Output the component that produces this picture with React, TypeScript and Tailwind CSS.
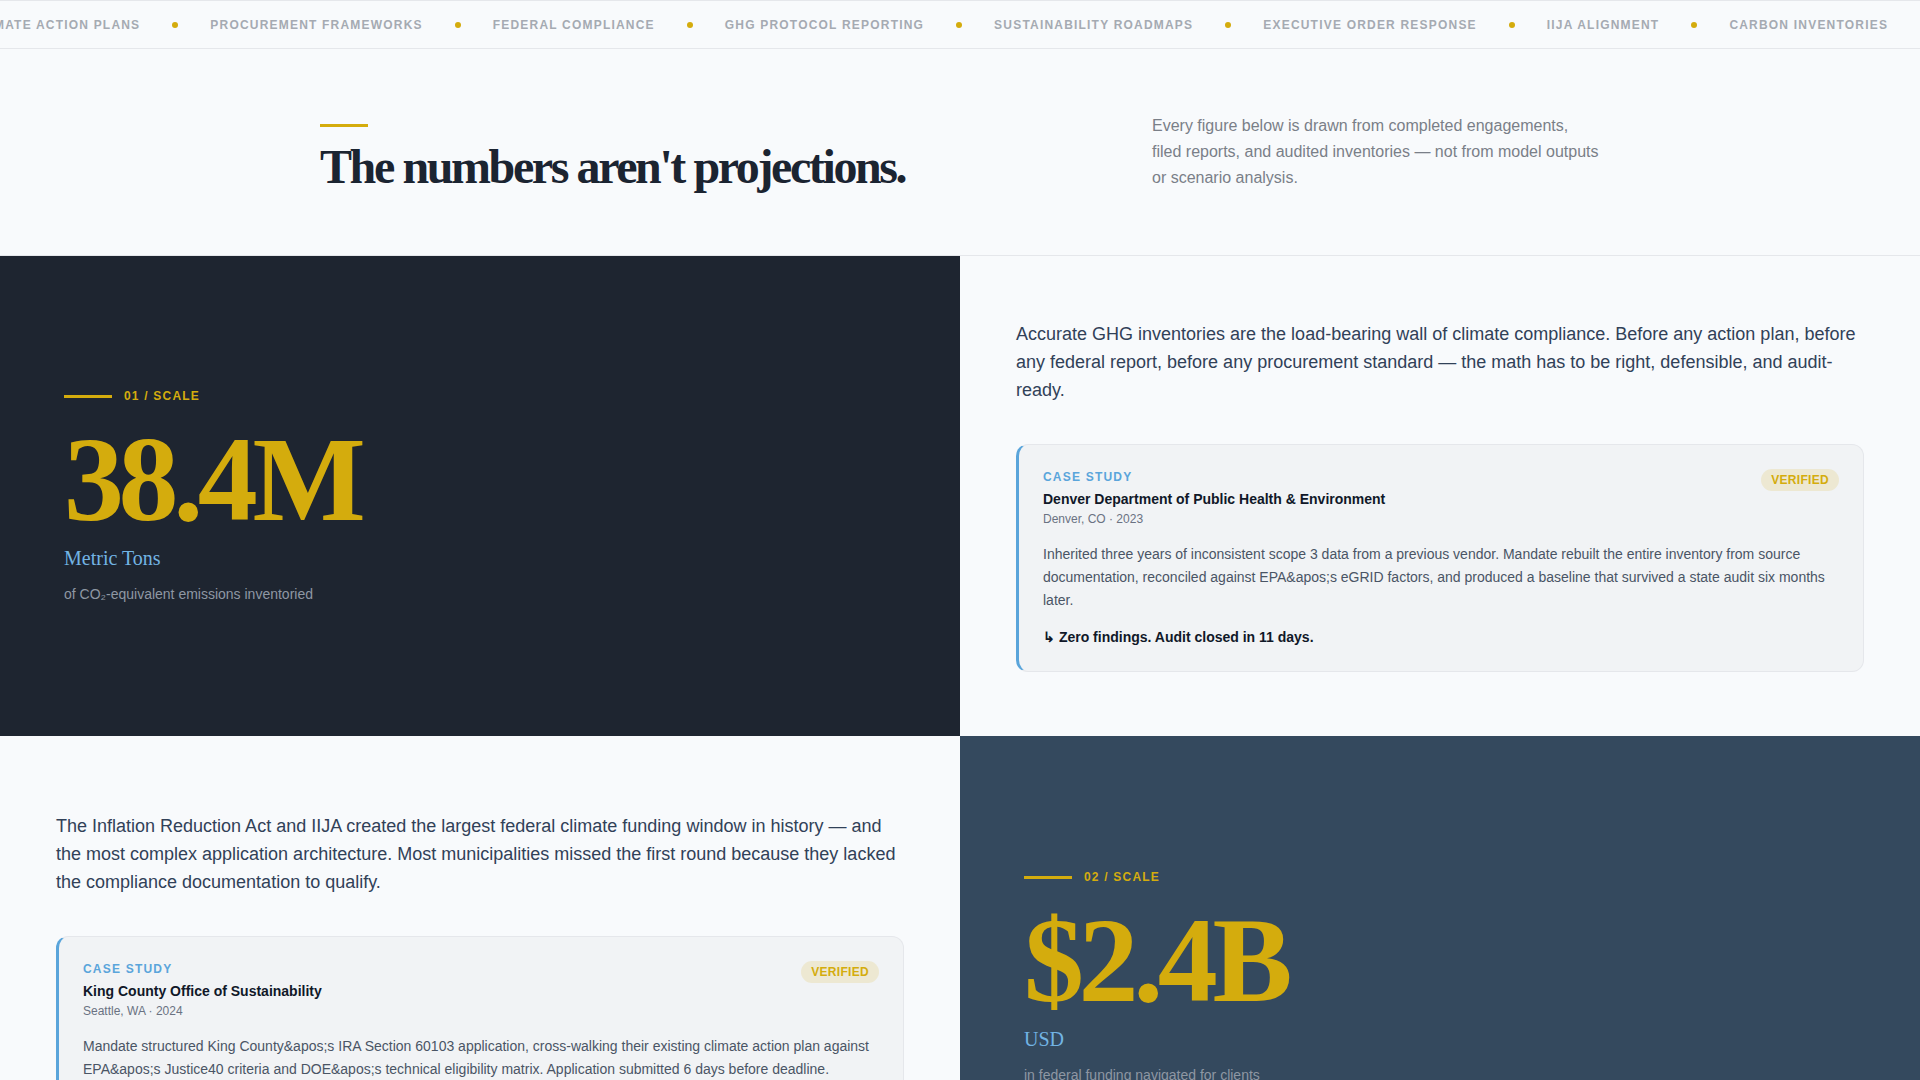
import { FC } from "react";

const tickerItems = [
  "Climate Action Plans",
  "Procurement Frameworks",
  "Federal Compliance",
  "GHG Protocol Reporting",
  "Sustainability Roadmaps",
  "Executive Order Response",
  "IIJA Alignment",
  "Carbon Inventories",
];

type CaseStudy = {
  org: string;
  place: string;
  body: string;
  result: string;
};

const denver: CaseStudy = {
  org: "Denver Department of Public Health & Environment",
  place: "Denver, CO · 2023",
  body: "Inherited three years of inconsistent scope 3 data from a previous vendor. Mandate rebuilt the entire inventory from source documentation, reconciled against EPA&apos;s eGRID factors, and produced a baseline that survived a state audit six months later.",
  result: "Zero findings. Audit closed in 11 days.",
};

const kingCounty: CaseStudy = {
  org: "King County Office of Sustainability",
  place: "Seattle, WA · 2024",
  body: "Mandate structured King County&apos;s IRA Section 60103 application, cross-walking their existing climate action plan against EPA&apos;s Justice40 criteria and DOE&apos;s technical eligibility matrix. Application submitted 6 days before deadline.",
  result: "Funded in full on the first round.",
};

const Ticker: FC = () => (
  <div className="flex h-[49px] items-center overflow-hidden border-y border-gray-200 bg-[#f8fafc]">
    <div className="-ml-[29px] flex shrink-0 items-center gap-8 whitespace-nowrap">
      {[...tickerItems, ...tickerItems].map((item, index) => (
        <div key={index} className="flex items-center gap-8">
          <span className="text-xs font-bold uppercase tracking-widest text-[#a5aab2]">
            {item}
          </span>
          <span className="h-1.5 w-1.5 rounded-full bg-[#d4ac0d]" />
        </div>
      ))}
    </div>
  </div>
);

const StatPanel: FC<{
  index: string;
  value: string;
  unit: string;
  caption: React.ReactNode;
  bg: string;
}> = ({ index, value, unit, caption, bg }) => (
  <div className={`flex flex-col justify-center px-16 py-16 ${bg}`}>
    <div className="flex items-center gap-3">
      <span className="h-[3px] w-12 bg-[#d4ac0d]" />
      <span className="text-xs font-bold uppercase tracking-widest text-[#d4ac0d]">
        {index} / Scale
      </span>
    </div>
    <div className="mt-4 font-['Liberation_Serif',serif] text-[120px] font-bold leading-none tracking-[-0.045em] text-[#d4ac0d]">
      {value}
    </div>
    <div className="mt-1 font-['Liberation_Serif',serif] text-xl text-[#72b4e4]">
      {unit}
    </div>
    <div className="mt-3 text-sm text-[#8e97a3]">{caption}</div>
  </div>
);

const CaseStudyCard: FC<{ study: CaseStudy }> = ({ study }) => (
  <div className="mt-10 rounded-xl border border-gray-200 border-l-[3px] border-l-[#5aa5db] bg-[#f1f3f5] p-6">
    <div className="flex items-start justify-between gap-6">
      <div>
        <div className="text-xs font-bold uppercase tracking-widest text-[#5aa5db]">
          Case Study
        </div>
        <div className="mt-1 text-sm font-bold text-gray-900">{study.org}</div>
        <div className="mt-0.5 text-xs text-gray-500">{study.place}</div>
      </div>
      <span className="rounded-full bg-[#d4ac0d]/15 px-2.5 py-[3px] text-xs font-bold uppercase tracking-wide text-[#d4ac0d]">
        Verified
      </span>
    </div>
    <p className="mt-4 text-sm leading-relaxed text-gray-600">{study.body}</p>
    <p className="mt-4 text-sm font-bold text-gray-900">↳ {study.result}</p>
  </div>
);

const StoryPanel: FC<{ lead: string; study: CaseStudy; pad?: string }> = ({
  lead,
  study,
  pad = "py-16",
}) => (
  <div className={`flex flex-col justify-center bg-[#f8fafc] px-14 ${pad}`}>
    <p className="text-lg leading-7 text-slate-700">{lead}</p>
    <CaseStudyCard study={study} />
  </div>
);

export default function App() {
  return (
    <div className="min-h-screen bg-[#f8fafc] font-['Liberation_Sans',Arial,sans-serif]">
      <Ticker />

      <header className="border-b border-gray-200 py-16">
        <div className="mx-auto flex max-w-[1280px] items-end justify-between">
          <div>
            <div className="mb-4 h-[3px] w-12 bg-[#d4ac0d]" />
            <h2 className="font-['Liberation_Serif',serif] text-5xl font-bold leading-none tracking-tighter text-[#1b2431]">
              The numbers aren't projections.
            </h2>
          </div>
          <p className="max-w-md text-base leading-relaxed text-[#7a7f88]">
            Every figure below is drawn from completed engagements, filed reports, and audited
            inventories — not from model outputs or scenario analysis.
          </p>
        </div>
      </header>

      <section className="grid grid-cols-2">
        <StatPanel
          index="01"
          value="38.4M"
          unit="Metric Tons"
          caption={<>of CO₂-equivalent emissions inventoried</>}
          bg="bg-[#1e2530]"
        />
        <StoryPanel
          lead="Accurate GHG inventories are the load-bearing wall of climate compliance. Before any action plan, before any federal report, before any procurement standard — the math has to be right, defensible, and audit-ready."
          study={denver}
        />
        <StoryPanel
          lead="The Inflation Reduction Act and IIJA created the largest federal climate funding window in history — and the most complex application architecture. Most municipalities missed the first round because they lacked the compliance documentation to qualify."
          study={kingCounty}
          pad="py-[76px]"
        />
        <StatPanel
          index="02"
          value="$2.4B"
          unit="USD"
          caption="in federal funding navigated for clients"
          bg="bg-[#34495e]"
        />
      </section>
    </div>
  );
}
